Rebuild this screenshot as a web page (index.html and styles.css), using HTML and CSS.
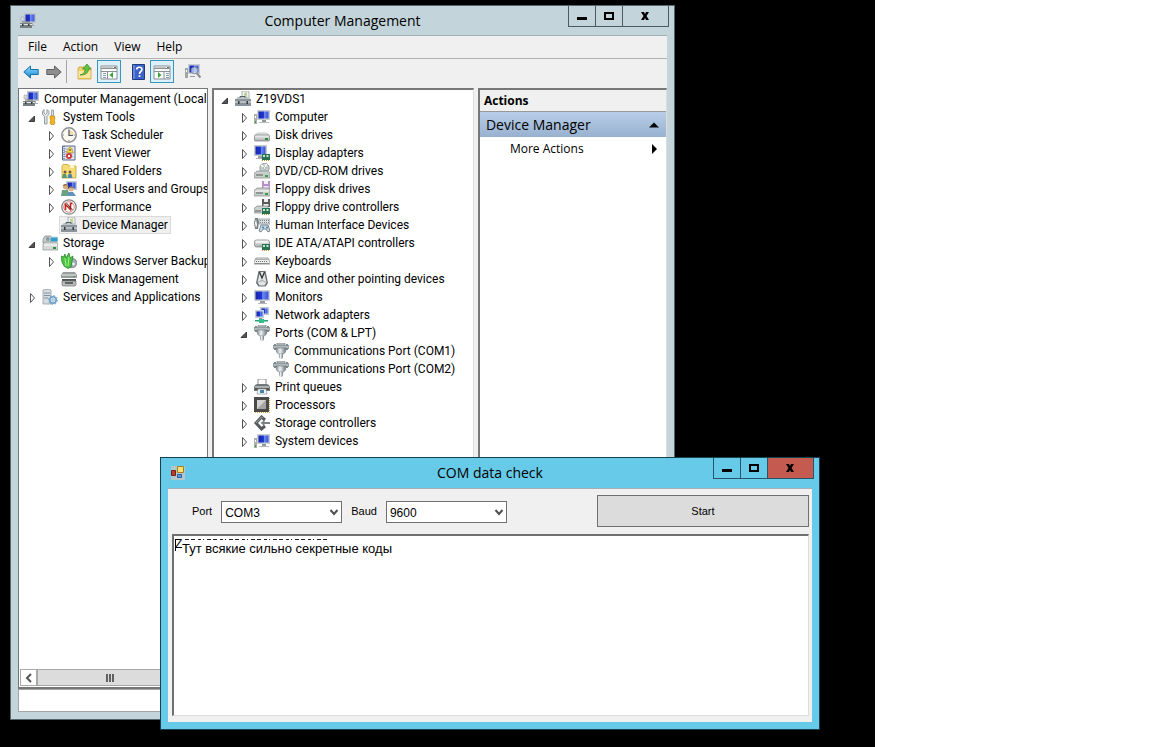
FILE: index.html
```html
<!DOCTYPE html>
<html lang="en">
<head>
<meta charset="utf-8">
<title>Computer Management</title>
<link rel="stylesheet" href="styles.css">
</head>
<body>
<svg class="sprites" aria-hidden="true">
  <defs>
    <linearGradient id="screen" x1="0" y1="0" x2="1" y2="0"><stop offset="0" stop-color="#1526b4"/><stop offset=".5" stop-color="#2038cc"/><stop offset=".55" stop-color="#6f8df0"/><stop offset="1" stop-color="#3652d8"/></linearGradient>
    <linearGradient id="metal" x1="0" y1="0" x2="0" y2="1"><stop offset="0" stop-color="#fafafa"/><stop offset="1" stop-color="#a4a8aa"/></linearGradient>
    <linearGradient id="plug" x1="0" y1="0" x2="1" y2="0"><stop offset="0" stop-color="#7e8a8f"/><stop offset=".4" stop-color="#eef2f4"/><stop offset="1" stop-color="#66737a"/></linearGradient>
    <linearGradient id="sky" x1="0" y1="0" x2="0" y2="1"><stop offset="0" stop-color="#8fdcff"/><stop offset="1" stop-color="#1687d2"/></linearGradient>
  </defs>
  <symbol id="monitor" viewBox="0 0 16 16"><path d="M0 1h16v11H0z" fill="#cfd3d4"/><path d="M1.500 2.500h13v8h-13z" fill="url(#screen)"/><path d="M6 12h5v2H6z" fill="#989da0"/><path d="M4 14h9v1H4z" fill="#b5b9bb"/></symbol>
  <symbol id="computer" viewBox="0 0 16 16"><path d="M0 5h3v10H0z" fill="#aab2a8"/><path d="M1 7h1v2H1z" fill="#fff"/><path d="M1 12h1v2H1z" fill="#499448"/><path d="M3 1h13v10H3z" fill="#c8cdd2"/><path d="M4.500 2.500h10v7h-10z" fill="url(#screen)"/><path d="M8 11h4v2H8z" fill="#92989c"/><path d="M5 13h10v1H5z" fill="#b5babd"/></symbol>
  <symbol id="manage" viewBox="0 0 16 16"><path d="M4 0h12v10H4z" fill="#bfc5cb"/><path d="M5.500 1.500h9v7h-9z" fill="url(#screen)"/><path d="M9 10h4v2H9zM12 12h3v1h-3z" fill="#a8adb0"/><path d="M1 4h3v4H1z" fill="#d9dddf" stroke="#8d9498" stroke-width=".5"/><path d="M2 9.500h8v-1H2z" fill="#777"/><path d="M0 10h12v5H0z" fill="#777f82"/><path d="M0 11.500h12" stroke="#e2e6e7"/><path d="M2 11h1.500v2H2zM8 11h1.500v2H8z" fill="#353a3c"/></symbol>
  <symbol id="toolbox" viewBox="0 0 16 16"><path d="M7 0h6l1 1v6H7z" fill="#f2f3ef" stroke="#9a9f9f" stroke-width=".8"/><path d="M9 2l3-1v5H9z" fill="#b7d69f"/><path d="M1 8l1.500-2h11L15.500 8z" fill="#c0c7ca"/><path d="M5 7V5.500h5V7" fill="none" stroke="#596065"/><path d="M0 8h16v7H0z" fill="#8a949a"/><path d="M0 11h16" stroke="#e5e9eb"/><path d="M3 10h1.500v3H3zM11.500 10H13v3h-1.500z" fill="#333b3f"/></symbol>
  <symbol id="tools" viewBox="0 0 16 16"><path d="M2 .5v3.500l1.500 1.500L5 4V.5l2 2v3L5 7.500V15H2.500V7.500L.5 5.500v-3z" fill="#e2e6e8" stroke="#7d868b" stroke-width=".8"/><path d="M9.500 1h2v7h-2z" fill="#d9dddf" stroke="#81898d" stroke-width=".7"/><path d="M8 7h4.500l.5 3-.8 1 .8 3-1 1.500H9L8 14l.7-3L8 10z" fill="#f2b51d" stroke="#b37c0a" stroke-width=".6"/></symbol>
  <symbol id="clock" viewBox="0 0 16 16"><circle cx="8" cy="8" r="7.200" fill="#fbf8ed" stroke="#8b8f94" stroke-width="1.500"/><path d="M8 8V3a5 5 0 0 1 5 5z" fill="#f6ddb0"/><path d="M8 3v5.500h4" fill="none" stroke="#46576c" stroke-width="1.200"/><path d="M8 1.800v1M8 13v1.200M1.800 8h1M13.200 8h1" stroke="#777"/></symbol>
  <symbol id="events" viewBox="0 0 16 16"><path d="M1.500 1h12.500v14H1.500z" fill="#dfe6f2" stroke="#586b8b"/><path d="M3 4h9M3 6.500h9M3 9h9M3 11.500h9" stroke="#8b9dbb" stroke-width=".8"/><path d="M3 1v14" stroke="#3d5378" stroke-dasharray="1 1"/><path d="M9 1.500l3.500 6h-7z" fill="#ffdc45" stroke="#b28a12" stroke-width=".6"/><path d="M9 4v2" stroke="#333"/><circle cx="8" cy="11" r="3" fill="#d8393b"/><path d="M7 10l2 2M9 10l-2 2" stroke="#fff"/></symbol>
  <symbol id="shared" viewBox="0 0 16 16"><path d="M1 3l1-1.500h5L8 3h7v12H1z" fill="#f6dc76" stroke="#caa136" stroke-width=".8"/><path d="M9 2h4v3H9z" fill="#fff5c8"/><circle cx="4" cy="9" r="1.500" fill="#7a5739"/><circle cx="9" cy="9" r="1.500" fill="#7a5739"/><path d="M1 15l1-4h3l1 4z" fill="#4f9a73"/><path d="M6.500 15l1-4h3l1 4z" fill="#4d86b4"/></symbol>
  <symbol id="users" viewBox="0 0 16 16"><path d="M5 0h11v9H5z" fill="#c6ccd2"/><path d="M6.500 1.500h8v6h-8z" fill="url(#screen)"/><circle cx="4.500" cy="5.500" r="2.700" fill="#d5ab79"/><path d="M2 5a2.700 2.700 0 0 1 5 0L5 4z" fill="#654b31"/><path d="M0 15l1-6h6l2 6z" fill="#6ba182"/><circle cx="10" cy="8" r="2.500" fill="#deb88b"/><path d="M7.500 7.500a2.600 2.600 0 0 1 5 0L10 6.500z" fill="#8c682e"/><path d="M6 15l2-4h4l3 4z" fill="#5f94be"/></symbol>
  <symbol id="perf" viewBox="0 0 16 16"><circle cx="8" cy="8" r="7.200" fill="#fff" stroke="#858585" stroke-width="1.300"/><circle cx="8" cy="8" r="5.300" fill="#fff" stroke="#d6867f"/><path d="M4.500 11V5.500l5 5V4.500h1.800" fill="none" stroke="#c8281f" stroke-width="1.600"/><path d="M5.500 4l6 7" stroke="#333" stroke-width=".9"/></symbol>
  <symbol id="storage" viewBox="0 0 16 16"><path d="M1 4l2-3h6l2 3v4H1z" fill="#c6cccc" stroke="#7d8587" stroke-width=".7"/><circle cx="6" cy="4" r="2" fill="#8b9497"/><path d="M8 2h8v5H8z" fill="#319fcb" stroke="#d0d9dd"/><path d="M1 9l2-2h11l2 2v6H1z" fill="#d4d8d7" stroke="#8b9291" stroke-width=".7"/><path d="M2 10h13" stroke="#fff"/><path d="M11 12h3v2h-3z" fill="#299238"/></symbol>
  <symbol id="backup" viewBox="0 0 16 16"><circle cx="11" cy="10" r="4.800" fill="#a2abad" stroke="#697477" stroke-width=".7"/><path d="M0 3l2.500 1L4 1l1 4 3-5 1 5 3-2-1 5-1 6-3 1.500L3 13 1 9z" fill="#4bc441" stroke="#27852c" stroke-width=".8"/><path d="M4 5l1 8M8 4l-1 9" stroke="#a5ec8d"/><circle cx="12.500" cy="11" r="1.400" fill="#e9eeee"/></symbol>
  <symbol id="disks" viewBox="0 0 16 16"><path d="M2 1h12l2 3v3H0V4z" fill="#999d9c"/><path d="M1 4h14" stroke="#eee"/><path d="M1 8h14v2H1z" fill="#4f5454"/><path d="M1 10h14v4l-1 1H2l-1-1z" fill="#b8bbb9" stroke="#6e7372" stroke-width=".7"/><path d="M4 11h8v2H4z" fill="#606665"/><path d="M12 5h2v1h-2z" fill="#4b995e"/></symbol>
  <symbol id="services" viewBox="0 0 16 16"><path d="M1 1l6-1 2 1v14H1z" fill="#d7dee2" stroke="#89949a" stroke-width=".7"/><path d="M2 4h6M2 6.500h6M2 9h4" stroke="#81909a"/><circle cx="11" cy="11" r="3.200" fill="#d6ecfa" stroke="#6c9fc4" stroke-width="1.600"/><circle cx="11" cy="11" r="4.500" fill="none" stroke="#6c9fc4" stroke-dasharray="1.500 2"/><circle cx="11" cy="11" r="1.200" fill="#fff" stroke="#568eb7" stroke-width=".6"/></symbol>
  <symbol id="disk" viewBox="0 0 16 16"><path d="M1 8l3-2h8l3 2z" fill="#f3f4f3" stroke="#abb0ae" stroke-width=".7"/><rect x=".5" y="8" width="15" height="6" rx="1" fill="url(#metal)" stroke="#838886" stroke-width=".8"/><path d="M11 11h3v2h-3z" fill="#279030"/></symbol>
  <symbol id="chip" viewBox="0 0 16 16"><path d="M8 9h8v6H8z" fill="#287153"/><path d="M9 10h2v2H9zM12.500 10h2v2h-2z" fill="#c5ead5"/><path d="M8 15h1v1H8zM10 15h1v1h-1zM12 15h1v1h-1zM14 15h1v1h-1z" fill="#b99a38"/></symbol>
  <symbol id="display" viewBox="0 0 16 16"><path d="M0 0h13v11H0z" fill="#c7ccd0"/><path d="M1.500 1.500h10v8h-10z" fill="url(#screen)"/><path d="M4 11h5v2H4z" fill="#9ba0a2"/><path d="M2 13h7v1H2z" fill="#abb0b2"/><use href="#chip"/></symbol>
  <symbol id="dvd" viewBox="0 0 16 16"><circle cx="10.500" cy="5" r="4.700" fill="#c7cfcc" stroke="#81908d" stroke-width=".8"/><path d="M10.500 5L7 2M10.500 5l2-4" stroke="#fff" stroke-width="1.500"/><circle cx="10.500" cy="5" r="1.300" fill="#fff" stroke="#778" stroke-width=".5"/><path d="M1 10l2-2h11l2 2v5H0v-5z" fill="#c9cecb" stroke="#7f8784" stroke-width=".7"/><path d="M2 12h7" stroke="#555f5b"/><path d="M11 12h3v2h-3z" fill="#36a34b"/></symbol>
  <symbol id="floppy" viewBox="0 0 16 16"><path d="M8 0h8v8H8z" fill="#b78fc7"/><path d="M10 0h4v3h-4z" fill="#f2eef5"/><path d="M9.500 5h5v3h-5z" fill="#eee3f3"/><path d="M1 9l2-2h11l2 2v6H0V9z" fill="#c9cecb" stroke="#7f8784" stroke-width=".7"/><path d="M1 10h14" stroke="#fff"/><path d="M2 12h7" stroke="#555f5b"/><path d="M11 12h3v2h-3z" fill="#36a34b"/></symbol>
  <symbol id="floppyctl" viewBox="0 0 16 16"><path d="M8 0h8v8H8z" fill="#59595b"/><path d="M10 0h4v3h-4zM9.500 5h5v2h-5z" fill="#eee"/><path d="M1 9l2-2h11v7H0V9z" fill="#cbd0cd" stroke="#7f8784" stroke-width=".7"/><path d="M1 12h6" stroke="#555f5b"/><use href="#chip"/></symbol>
  <symbol id="hid" viewBox="0 0 16 16"><path d="M5 2h11v5H5z" fill="#dfe3e4" stroke="#888f92" stroke-width=".7"/><path d="M6 3.500h9M6 5.500h9" stroke="#777f83" stroke-dasharray="1 1"/><path d="M1 1h3l1 4-1 7H1L0 6z" fill="#777f83"/><path d="M2 2l1 6-1 3-1-5z" fill="#fff"/><path d="M7 8h7l2 6-2 1-2-3H9l-2 3-2-1z" fill="#c9d7df" stroke="#60717d" stroke-width=".8"/><circle cx="9" cy="10.500" r="1" fill="#3f82a8"/><circle cx="13" cy="10.500" r="1" fill="#3f82a8"/></symbol>
  <symbol id="ide" viewBox="0 0 16 16"><rect x=".5" y="5" width="15" height="7" rx="2" fill="url(#metal)" stroke="#848a88" stroke-width=".8"/><path d="M2 7h12" stroke="#fff"/><use href="#chip"/></symbol>
  <symbol id="keyboard" viewBox="0 0 16 16"><path d="M2 5h12l2 4v2H0V9z" fill="#edeeed" stroke="#818684" stroke-width=".8"/><path d="M2.500 6.500h11M2 8.500h12" stroke="#676e6b" stroke-width="1.200" stroke-dasharray="1 1"/><path d="M1 10.500h14" stroke="#898e8c"/></symbol>
  <symbol id="mouse" viewBox="0 0 16 16"><path d="M4.500 0h7L14 12l-2.500 3.500h-7L2 12z" fill="#6b7072"/><path d="M6 1h4l2.500 10-2 3.500h-5L3.500 11z" fill="#e3e5e5"/><path d="M5.500 1L8 7l2.500-6" fill="none" stroke="#303538" stroke-width="1.300"/><path d="M4.500 11Q8 8 11.500 11" fill="none" stroke="#9ca1a3"/></symbol>
  <symbol id="network" viewBox="0 0 16 16"><path d="M6 0h9v8H6z" fill="#bcc8d8"/><path d="M7.500 1.500h6v5h-6z" fill="url(#screen)"/><path d="M1 3h9v8H1z" fill="#c6d0de"/><path d="M2.500 4.500h6v5h-6z" fill="url(#screen)"/><path d="M5 11h3v2H5z" fill="#879b91"/><path d="M1 13h13v1.500H1z" fill="#26a579"/><path d="M5 12h5v4H5z" fill="#34bf91"/></symbol>
  <symbol id="port" viewBox="0 0 16 16"><path d="M4 0h8v2H4z" fill="#c2c8cb" stroke="#707b80" stroke-width=".6"/><path d="M1 1h2v6H1zM13 1h2v6h-2z" fill="#7f8a8f"/><path d="M0 2.500h16v3H0z" fill="#b0b8bc" stroke="#6f797d" stroke-width=".6"/><path d="M3 5h10l-.5 4-2 2H5.500l-2-2z" fill="url(#plug)" stroke="#6c787d" stroke-width=".6"/><path d="M6 11h4v3L9 16H7l-1-2z" fill="url(#plug)"/></symbol>
  <symbol id="printer" viewBox="0 0 16 16"><path d="M4 0h8v6H4z" fill="#fff" stroke="#858a8c"/><path d="M1 6l2-1h10l2 1 1 2v4H0V8z" fill="#73787a"/><path d="M1 8h14" stroke="#e5e7e7"/><path d="M1 10h14" stroke="#34393b"/><path d="M4 10h8l1 5H3z" fill="#f5f7f7" stroke="#8d9395" stroke-width=".7"/><path d="M6 11h4v3H6z" fill="#3e86a9"/></symbol>
  <symbol id="cpu" viewBox="0 0 16 16"><path d="M1 15.500h14.500V1" fill="none" stroke="#c9a943" stroke-dasharray="1 1"/><path d="M0 0h15v15H0z" fill="#4c4a48"/><path d="M3 3h9v9H3z" fill="#a5a5a4"/><path d="M3 3h9L3 12z" fill="#d2d2d1"/></symbol>
  <symbol id="storagectl" viewBox="0 0 16 16"><path d="M11 5L7.500 2 2 8l5.500 6L11 11" fill="none" stroke="#555a5b" stroke-width="3"/><path d="M9 3L7.500 2 2 8" fill="none" stroke="#a6aaaa" stroke-width=".9"/><path d="M6.500 8l4-3v2H16v2h-5.500v2z" fill="#7d8284"/></symbol>
  <symbol id="closed" viewBox="0 0 8 14"><path d="M2.500 3.500l4 4.500-4 4.500z" fill="#fff" stroke="#555"/></symbol>
  <symbol id="open" viewBox="0 0 8 14"><path d="M6.500 6v5.500H1z" fill="#555" stroke="#222" stroke-width=".8"/></symbol>
  <symbol id="arrow" viewBox="0 0 16 16"><path d="M.8 8l6.700-6v3.500h7.700v5H7.500V14z" stroke-width="1"/></symbol>
  <symbol id="up" viewBox="0 0 16 16"><path d="M1 5l1-2h5l1 1h6v11H1z" fill="#f3d268" stroke="#c39e3c" stroke-width=".8"/><path d="M1.500 7h12v7h-12z" fill="#fbe59a"/><path d="M3 11c4-1 5-3 5-6H5.500L10 0l4 5h-2.500c0 4-3 6-8.500 6z" fill="#62c343" stroke="#39872a" stroke-width=".7"/></symbol>
  <symbol id="pane" viewBox="0 0 18 16"><path d="M1 2h16v13H1z" fill="#fbfbfb" stroke="#8a9094"/><path d="M1 4.500h16M1 7.500h16" stroke="#8a9094"/><path d="M2 3h11v1H2z" fill="#c5c9cb"/><path d="M14 3h2v1h-2z" fill="#666"/></symbol>
  <symbol id="treepane" viewBox="0 0 18 16"><use href="#pane"/><path d="M7.500 7v8" stroke="#8a9094"/><path d="M3 9.500h3M3 11.500h3M3 13.500h3" stroke="#7ba0b8"/><path d="M13 8v6l-3.500-3z" fill="#39a536"/></symbol>
  <symbol id="actionpane" viewBox="0 0 18 16"><use href="#pane"/><path d="M11 7v8" stroke="#8a9094"/><path d="M13 9.500h3M13 11.500h3M13 13.500h3" stroke="#7ba0b8"/><path d="M5 8v6l3.500-3z" fill="#39a536"/></symbol>
  <symbol id="help" viewBox="0 0 16 16"><path d="M2.500.5h12v15h-12z" fill="#3b62c4" stroke="#203b86"/><path d="M4 1v14" stroke="#8da9ea"/><path d="M6.700 5.500C6.700 2.500 12 2.500 12 5.500c0 2-2.500 2-2.500 4.500M9.500 11.300v1.700" fill="none" stroke="#fff" stroke-width="1.700"/></symbol>
  <symbol id="scan" viewBox="0 0 16 16"><path d="M0 4h3v10H0z" fill="#9ea8a2"/><path d="M1 6h1v2H1z" fill="#fff"/><path d="M3 0h12v10H3z" fill="#c9cdd2"/><path d="M4.500 1.500h9v7h-9z" fill="url(#screen)"/><circle cx="9.500" cy="6.500" r="3.300" fill="#c9def6" fill-opacity=".75" stroke="#858d97"/><path d="M12 9.500l3.500 4" stroke="#8c8c8c" stroke-width="2"/><path d="M5 12h5v1H5z" fill="#999"/></symbol>
  <symbol id="form" viewBox="0 0 16 16"><path d="M1 1h14v14H1z" fill="#b4c7cc"/><path d="M7.500 1.500h6v6h-6z" fill="#fae271" stroke="#a27b22"/><path d="M1.500 5.500h4v5h-4z" fill="#bd3b28" stroke="#6e2116"/><path d="M7.500 9.500h4v3h-4z" fill="#5d9be5" stroke="#335a9c"/></symbol>
  <symbol id="min" viewBox="0 0 12 12"><path d="M1 7h10v3H1z"/></symbol>
  <symbol id="max" viewBox="0 0 12 12"><path d="M2 3h8v6H2z" fill="none" stroke="#000" stroke-width="2"/></symbol>
  <symbol id="close" viewBox="0 0 12 12"><path d="M2 2h3l1 2 1-2h3L7.500 6l2.500 4H7L6 8l-1 2H2l2.500-4z"/></symbol>
  <symbol id="chevron" viewBox="0 0 10 8"><path d="M1.500 2L5 6l3.500-4" fill="none" stroke="#505050" stroke-width="2"/></symbol>
</svg>

<main class="desktop">
  <section class="window management">
    <header class="titlebar">
      <svg class="icon"><use href="#manage"/></svg>
      <h1 class="title">Computer Management</h1>
      <div class="controls">
        <button class="control" aria-label="Minimize"><svg><use href="#min"/></svg></button>
        <button class="control" aria-label="Maximize"><svg><use href="#max"/></svg></button>
        <button class="control wide" aria-label="Close"><svg><use href="#close"/></svg></button>
      </div>
    </header>
    <div class="client">
      <nav class="menu"><button>File</button><button>Action</button><button>View</button><button>Help</button></nav>
      <div class="toolbar">
        <div class="group nav"><button class="back" aria-label="Back"><svg class="icon"><use href="#arrow"/></svg></button><button class="forward" aria-label="Forward"><svg class="icon"><use href="#arrow"/></svg></button></div>
        <div class="group"><button aria-label="Up"><svg class="icon"><use href="#up"/></svg></button><button class="pressed" aria-label="Console tree"><svg class="icon large"><use href="#treepane"/></svg></button></div>
        <div class="group"><button aria-label="Help topics"><svg class="icon"><use href="#help"/></svg></button><button class="pressed" aria-label="Action pane"><svg class="icon large"><use href="#actionpane"/></svg></button></div>
        <div class="group last"><button aria-label="Scan for changes"><svg class="icon"><use href="#scan"/></svg></button></div>
      </div>
      <div class="panes">
        <div class="pane console">
          <div class="root"><svg class="icon"><use href="#manage"/></svg><span>Computer Management (Local</span></div>
          <ul class="tree">
            <li><div class="row"><svg class="twisty"><use href="#open"/></svg><svg class="icon"><use href="#tools"/></svg><span>System Tools</span></div>
              <ul>
                <li class="row"><svg class="twisty"><use href="#closed"/></svg><svg class="icon"><use href="#clock"/></svg><span>Task Scheduler</span></li>
                <li class="row"><svg class="twisty"><use href="#closed"/></svg><svg class="icon"><use href="#events"/></svg><span>Event Viewer</span></li>
                <li class="row"><svg class="twisty"><use href="#closed"/></svg><svg class="icon"><use href="#shared"/></svg><span>Shared Folders</span></li>
                <li class="row"><svg class="twisty"><use href="#closed"/></svg><svg class="icon"><use href="#users"/></svg><span>Local Users and Groups</span></li>
                <li class="row"><svg class="twisty"><use href="#closed"/></svg><svg class="icon"><use href="#perf"/></svg><span>Performance</span></li>
                <li class="row leaf"><div class="selected"><svg class="icon"><use href="#toolbox"/></svg><span>Device Manager</span></div></li>
              </ul>
            </li>
            <li><div class="row"><svg class="twisty"><use href="#open"/></svg><svg class="icon"><use href="#storage"/></svg><span>Storage</span></div>
              <ul>
                <li class="row"><svg class="twisty"><use href="#closed"/></svg><svg class="icon"><use href="#backup"/></svg><span>Windows Server Backup</span></li>
                <li class="row leaf"><svg class="icon"><use href="#disks"/></svg><span>Disk Management</span></li>
              </ul>
            </li>
            <li class="row"><svg class="twisty"><use href="#closed"/></svg><svg class="icon"><use href="#services"/></svg><span>Services and Applications</span></li>
          </ul>
          <div class="scrollbar">
            <button class="step" aria-label="Scroll left"><svg viewBox="0 0 8 10"><path d="M6 1L2 5l4 4" fill="none" stroke="#555" stroke-width="2"/></svg></button>
            <div class="thumb"><svg viewBox="0 0 8 8"><path d="M1 0v8M4 0v8M7 0v8" stroke="#606060" stroke-width="2"/></svg></div>
            <button class="step" aria-label="Scroll right"><svg viewBox="0 0 8 10"><path d="M2 1l4 4-4 4" fill="none" stroke="#555" stroke-width="2"/></svg></button>
          </div>
        </div>
        <div class="pane sunken devices">
          <ul class="tree">
            <li><div class="row"><svg class="twisty"><use href="#open"/></svg><svg class="icon"><use href="#toolbox"/></svg><span>Z19VDS1</span></div>
              <ul>
                <li class="row"><svg class="twisty"><use href="#closed"/></svg><svg class="icon"><use href="#computer"/></svg><span>Computer</span></li>
                <li class="row"><svg class="twisty"><use href="#closed"/></svg><svg class="icon"><use href="#disk"/></svg><span>Disk drives</span></li>
                <li class="row"><svg class="twisty"><use href="#closed"/></svg><svg class="icon"><use href="#display"/></svg><span>Display adapters</span></li>
                <li class="row"><svg class="twisty"><use href="#closed"/></svg><svg class="icon"><use href="#dvd"/></svg><span>DVD/CD-ROM drives</span></li>
                <li class="row"><svg class="twisty"><use href="#closed"/></svg><svg class="icon"><use href="#floppy"/></svg><span>Floppy disk drives</span></li>
                <li class="row"><svg class="twisty"><use href="#closed"/></svg><svg class="icon"><use href="#floppyctl"/></svg><span>Floppy drive controllers</span></li>
                <li class="row"><svg class="twisty"><use href="#closed"/></svg><svg class="icon"><use href="#hid"/></svg><span>Human Interface Devices</span></li>
                <li class="row"><svg class="twisty"><use href="#closed"/></svg><svg class="icon"><use href="#ide"/></svg><span>IDE ATA/ATAPI controllers</span></li>
                <li class="row"><svg class="twisty"><use href="#closed"/></svg><svg class="icon"><use href="#keyboard"/></svg><span>Keyboards</span></li>
                <li class="row"><svg class="twisty"><use href="#closed"/></svg><svg class="icon"><use href="#mouse"/></svg><span>Mice and other pointing devices</span></li>
                <li class="row"><svg class="twisty"><use href="#closed"/></svg><svg class="icon"><use href="#monitor"/></svg><span>Monitors</span></li>
                <li class="row"><svg class="twisty"><use href="#closed"/></svg><svg class="icon"><use href="#network"/></svg><span>Network adapters</span></li>
                <li><div class="row"><svg class="twisty"><use href="#open"/></svg><svg class="icon"><use href="#port"/></svg><span>Ports (COM &amp; LPT)</span></div>
                  <ul>
                    <li class="row leaf"><svg class="icon"><use href="#port"/></svg><span>Communications Port (COM1)</span></li>
                    <li class="row leaf"><svg class="icon"><use href="#port"/></svg><span>Communications Port (COM2)</span></li>
                  </ul>
                </li>
                <li class="row"><svg class="twisty"><use href="#closed"/></svg><svg class="icon"><use href="#printer"/></svg><span>Print queues</span></li>
                <li class="row"><svg class="twisty"><use href="#closed"/></svg><svg class="icon"><use href="#cpu"/></svg><span>Processors</span></li>
                <li class="row"><svg class="twisty"><use href="#closed"/></svg><svg class="icon"><use href="#storagectl"/></svg><span>Storage controllers</span></li>
                <li class="row"><svg class="twisty"><use href="#closed"/></svg><svg class="icon"><use href="#computer"/></svg><span>System devices</span></li>
              </ul>
            </li>
          </ul>
        </div>
        <aside class="pane sunken actions">
          <h2 class="actions-head">Actions</h2>
          <button class="actions-group"><span>Device Manager</span><svg viewBox="0 0 10 10"><path d="M0 7.500L5 2.500l5 5z"/></svg></button>
          <button class="actions-item"><span>More Actions</span><svg viewBox="0 0 10 10"><path d="M3 0l5 5-5 5z"/></svg></button>
        </aside>
      </div>
      <div class="status"></div>
    </div>
  </section>

  <section class="window checker">
    <header class="titlebar">
      <svg class="icon"><use href="#form"/></svg>
      <h2 class="title">COM data check</h2>
      <div class="controls">
        <button class="control" aria-label="Minimize"><svg><use href="#min"/></svg></button>
        <button class="control" aria-label="Maximize"><svg><use href="#max"/></svg></button>
        <button class="control wide danger" aria-label="Close"><svg><use href="#close"/></svg></button>
      </div>
    </header>
    <div class="client form">
      <div class="fields">
        <label for="port-name">Port</label>
        <div class="combo"><select id="port-name"><option>COM3</option></select><svg><use href="#chevron"/></svg></div>
        <label for="baud">Baud</label>
        <div class="combo"><select id="baud"><option>9600</option></select><svg><use href="#chevron"/></svg></div>
        <button class="start">Start</button>
      </div>
      <div class="output">
        <textarea class="log" aria-label="Received data">Z</textarea>
        <svg class="remnant"><path d="M2.500 1v12" stroke="#000"/><path d="M12 1.500h144" stroke="#222" stroke-dasharray="4 2 4 3 3 2 1 3"/></svg>
        <p class="note">Тут всякие сильно секретные коды</p>
      </div>
    </div>
  </section>
</main>
</body>
</html>
```

FILE: styles.css
```css
* { box-sizing: border-box; }
body { margin: 0; background: #fff; color: #000; font: 12px/18px "Open Sans", "Noto Sans", sans-serif; }
button { font: inherit; color: inherit; background: none; border: 0; padding: 0; margin: 0; }
ul { list-style: none; margin: 0; padding: 0; }
h1, h2, p { margin: 0; font-weight: 400; }
svg { display: block; flex: none; }
.sprites { position: absolute; width: 0; height: 0; }
.icon { width: 16px; height: 16px; }
.icon.large { width: 18px; }

.desktop { position: relative; width: 75.95%; height: 100vh; background: #000; overflow: hidden; }
.window { position: absolute; display: flex; flex-direction: column; border: 1px solid #56666c; padding: 0 7px 7px; }
.management { inset: 5px 200px 27px 10px; background: #c3d4da; }
.checker { inset: 457px 55px 17px 160px; background: #66cae8; border-color: #173f4d; }

.titlebar { display: grid; grid-template-columns: 101px 1fr 101px; height: 29px; flex: none; }
.titlebar > .icon { align-self: center; margin-left: 2px; }
.title { font-size: 14px; line-height: 29px; text-align: center; }
.controls { display: flex; justify-content: flex-end; height: 21px; margin-right: -2px; }
.control { display: grid; place-items: center; width: 27px; border: solid #4b5b61; border-width: 0 0 1px 1px; }
.control.wide { width: 47px; border-right-width: 1px; }
.control svg { width: 12px; height: 12px; }
.danger { background: #c45a50; }

.client { flex: 1; min-height: 0; display: flex; flex-direction: column; background: #f0f0f0; border-top: 1px solid #a3afb3; }
.menu { display: flex; gap: 16px; height: 23px; padding-left: 10px; border-bottom: 1px solid #b2b2b2; flex: none; }
.menu button { line-height: 22px; }
.toolbar { display: flex; gap: 5px; height: 29px; padding: 1px 0 0 4px; flex: none; }
.group { display: flex; height: 23px; }
.group button { display: grid; place-items: center; width: 24px; }
.group.last { padding-left: 2px; }
.nav { gap: 5px; padding-right: 3px; margin-right: 1px; border-right: 1px solid #a5a5a5; }
.nav button { width: 18px; }
.back { fill: url(#sky); stroke: #1672ad; }
.forward { fill: #8d8d8d; stroke: #606060; }
.group .forward svg { transform: scaleX(-1); }
.group .pressed { background: #dcf0fa; border: 1px solid #3796bd; }

.panes { flex: 1; min-height: 0; display: grid; grid-template-columns: 190fr 262fr 189fr; gap: 4px; }
.pane { background: #fff; overflow: hidden; min-width: 0; display: flex; flex-direction: column; white-space: nowrap; }
.console { border: 1px solid #73777a; border-bottom-width: 2px; padding-top: 1px; }
.console, .devices { font-family: Roboto, "Open Sans", sans-serif; }
.sunken { border: solid; border-width: 2px 1px 1px 2px; border-color: #777 #ddd #ddd #777; }
.root { display: flex; align-items: center; gap: 5px; height: 18px; padding-left: 4px; }
.console > .tree { padding-left: 9px; }
.devices > .tree { padding-left: 7px; }
.tree ul { padding-left: 19px; }
.row { display: flex; align-items: center; height: 18px; gap: 5px; }
.twisty { width: 8px; height: 14px; margin-right: 1px; }
.leaf { padding-left: 14px; }
.selected { display: flex; align-items: center; gap: 5px; height: 18px; margin-left: -2px; padding: 0 2px 0 1px; background: #f0f0f0; border: 1px solid #dadada; }
.scrollbar { display: flex; height: 17px; margin: auto 1px 1px; background: #f0f0f0; }
.step { width: 17px; display: grid; place-items: center; background: #fff; border: 1px solid #aaa; }
.step svg { width: 8px; height: 10px; }
.thumb { flex: 1; margin-right: 6px; display: grid; place-items: center; background: #dcdcdc; border: 1px solid #a6a6a6; }
.thumb svg { width: 8px; height: 8px; }
.status { height: 23px; background: #fff; border: 1px solid #a4a4a4; flex: none; }

.actions-head { padding-left: 4px; font-size: 12px; line-height: 21px; font-weight: 700; background: #f0f0f0; border-bottom: 1px solid #999; }
.actions-group, .actions-item { display: flex; align-items: center; justify-content: space-between; text-align: left; }
.actions-group { height: 25px; padding: 0 7px 0 6px; font-size: 14px; background: linear-gradient(#b8cee8, #98b1d0); }
.actions-item { height: 24px; padding: 0 7px 0 30px; }
.actions svg { width: 10px; height: 10px; }

.checker .control { border-color: #26566a; }
.checker .titlebar { height: 30px; }
.form { padding: 5px 3px 6px 4px; font: 11px/18px "Liberation Sans", Arial, sans-serif; }
.fields { display: flex; align-items: center; height: 34px; padding-left: 20px; flex: none; }
.combo { position: relative; width: 121px; margin: 2px 9px 0; }
select { appearance: none; display: block; width: 100%; height: 22px; padding: 1px 3px 0; font: inherit; font-size: 12px; color: #000; background: #fff; border: 1px solid #707070; border-radius: 0; }
.combo svg { position: absolute; right: 3px; top: 7px; width: 10px; height: 8px; pointer-events: none; }
.start { width: 212px; height: 32px; margin-left: auto; background: #dcdcdc; border: 1px solid #707070; }
.output { position: relative; flex: 1; min-height: 0; margin-top: 6px; }
.log { display: block; width: 100%; height: 100%; resize: none; padding: 0 1px; font: 12px/16px "Liberation Sans", Arial, sans-serif; background: #fff; border: solid; border-width: 2px 1px 1px 2px; border-color: #707070 #ddd #ddd #707070; outline: 0; }
.remnant { position: absolute; left: 1px; top: 4px; width: 160px; height: 14px; }
.note { position: absolute; left: 10px; top: 6px; font: 13px/18px "Liberation Sans", Arial, sans-serif; }
```
